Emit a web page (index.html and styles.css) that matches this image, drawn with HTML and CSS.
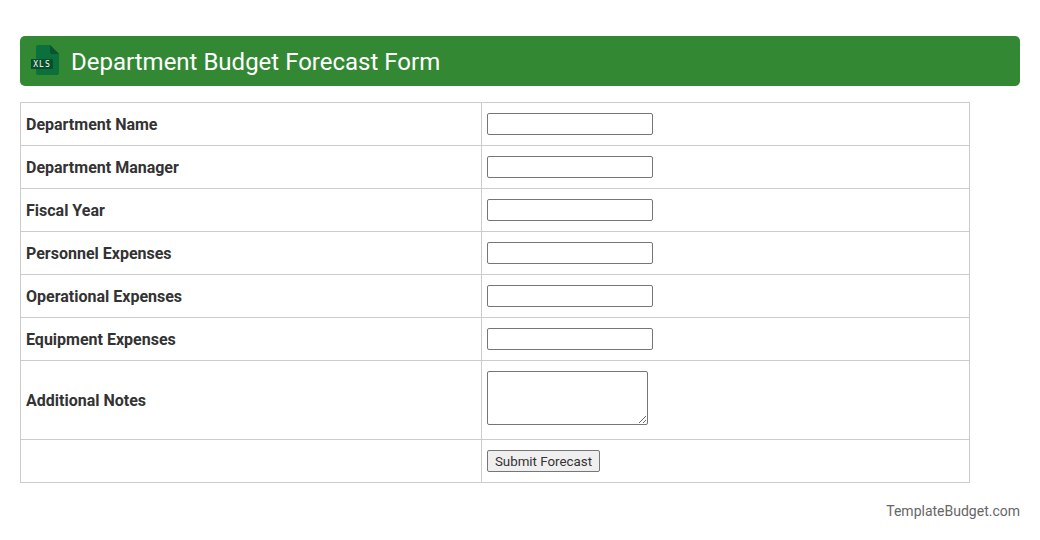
FILE: index.html
```html
<!DOCTYPE html>
<html lang="en">
<head>
<meta charset="utf-8">
<title>Department Budget Forecast Form</title>
<link rel="stylesheet" href="styles.css">
</head>
<body>
<header class="banner">
  <svg class="xls-icon" width="30" height="32" viewBox="0 0 30 32" aria-hidden="true">
    <path d="M6 2a2 2 0 0 1 2-2h12l9 9v19a2 2 0 0 1-2 2H8a2 2 0 0 1-2-2z" fill="#0b703c"/>
    <path d="M20 0l9 9h-7a2 2 0 0 1-2-2z" fill="#0a5230"/>
    <rect x="1" y="14" width="22" height="10" fill="#0a4f2c"/>
    <text x="12" y="22" class="xls-text" text-anchor="middle">XLS</text>
  </svg>
  <h1 class="banner-title">Department Budget Forecast Form</h1>
</header>
<form>
<table class="form-table">
  <tr><td class="label-cell">Department Name</td><td class="field-cell"><input class="field" type="text"></td></tr>
  <tr><td class="label-cell">Department Manager</td><td class="field-cell"><input class="field" type="text"></td></tr>
  <tr><td class="label-cell">Fiscal Year</td><td class="field-cell"><input class="field" type="text"></td></tr>
  <tr><td class="label-cell">Personnel Expenses</td><td class="field-cell"><input class="field" type="text"></td></tr>
  <tr><td class="label-cell">Operational Expenses</td><td class="field-cell"><input class="field" type="text"></td></tr>
  <tr><td class="label-cell">Equipment Expenses</td><td class="field-cell"><input class="field" type="text"></td></tr>
  <tr><td class="label-cell">Additional Notes</td><td class="field-cell"><textarea class="notes"></textarea></td></tr>
  <tr><td class="label-cell"></td><td class="field-cell"><button class="submit" type="button">Submit Forecast</button></td></tr>
</table>
</form>
<footer class="credit">TemplateBudget.com</footer>
</body>
</html>
```
FILE: styles.css
```css
* { box-sizing: border-box; }
body {
  margin: 0;
  padding: 36px 20px 0;
  font-family: Roboto, sans-serif;
  font-size: 16px;
  color: #333;
  background: #fff;
}
.banner {
  display: flex;
  align-items: center;
  height: 50px;
  padding-left: 10px;
  background: #338833;
  border-radius: 5px;
}
.xls-icon { flex: none; margin-right: 11px; }
.xls-text { font-family: "DejaVu Sans Mono", monospace; font-size: 8px; letter-spacing: 1px; fill: #fff; }
.banner-title {
  margin: 0;
  padding-top: 2px;
  font-size: 24px;
  font-weight: 400;
  color: #fff;
}
.form-table {
  width: 950px;
  margin-top: 16px;
  border-collapse: collapse;
  table-layout: fixed;
}
.form-table td {
  padding: 5px;
  border: 1px solid #ccc;
}
.label-cell { width: 461px; font-weight: 700; }
.field {
  display: block;
  width: 166px;
  height: 22px;
  margin: 5px 0;
  border: 1px solid #767676;
  border-radius: 2px;
  background: #fff;
}
.notes {
  display: block;
  width: 161px;
  height: 54px;
  margin: 5px 0 9px;
  border: 1px solid #767676;
  border-radius: 2px;
  background: #fff;
}
.submit {
  display: block;
  width: 113px;
  height: 22px;
  margin: 5px 0;
  padding: 1px 6px;
  font-family: Roboto, sans-serif;
  font-size: 13.333px;
  color: #333;
  background: #efefef;
  border: 1px solid #767676;
  border-radius: 2px;
}
.credit {
  margin-top: 20px;
  text-align: right;
  font-size: 14px;
  color: #666;
}
```
